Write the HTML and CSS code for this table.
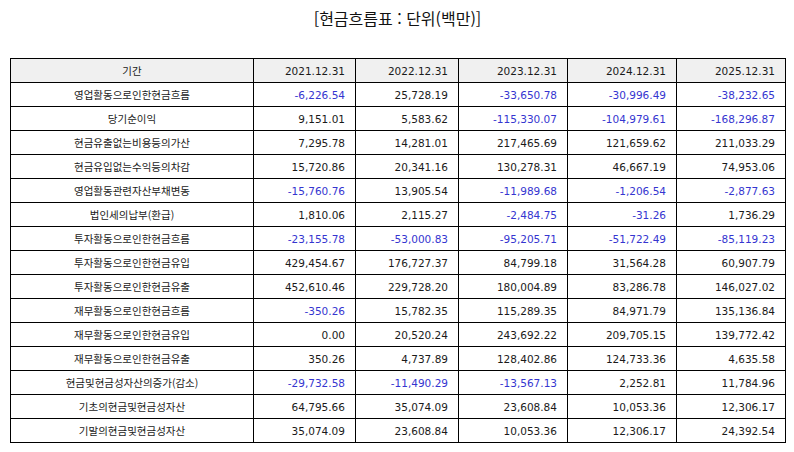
FILE: index.html
```html
<!DOCTYPE html>
<html lang="ko">
<head>
<meta charset="utf-8">
<link rel="stylesheet" href="styles.css">
</head>
<body>
<div class="page">
  <h1 class="title">[현금흐름표 : 단위(백만)]</h1>
  <table class="cf">
    <colgroup>
      <col class="c-label"><col class="c1"><col class="c2"><col class="c3"><col class="c4"><col class="c5">
    </colgroup>
    <thead>
      <tr><th class="label">기간</th><th>2021.12.31</th><th>2022.12.31</th><th>2023.12.31</th><th>2024.12.31</th><th>2025.12.31</th></tr>
    </thead>
    <tbody>
      <tr><td class="label">영업활동으로인한현금흐름</td><td class="neg">-6,226.54</td><td>25,728.19</td><td class="neg">-33,650.78</td><td class="neg">-30,996.49</td><td class="neg">-38,232.65</td></tr>
      <tr><td class="label">당기순이익</td><td>9,151.01</td><td>5,583.62</td><td class="neg">-115,330.07</td><td class="neg">-104,979.61</td><td class="neg">-168,296.87</td></tr>
      <tr><td class="label">현금유출없는비용등의가산</td><td>7,295.78</td><td>14,281.01</td><td>217,465.69</td><td>121,659.62</td><td>211,033.29</td></tr>
      <tr><td class="label">현금유입없는수익등의차감</td><td>15,720.86</td><td>20,341.16</td><td>130,278.31</td><td>46,667.19</td><td>74,953.06</td></tr>
      <tr><td class="label">영업활동관련자산부채변동</td><td class="neg">-15,760.76</td><td>13,905.54</td><td class="neg">-11,989.68</td><td class="neg">-1,206.54</td><td class="neg">-2,877.63</td></tr>
      <tr><td class="label">법인세의납부(환급)</td><td>1,810.06</td><td>2,115.27</td><td class="neg">-2,484.75</td><td class="neg">-31.26</td><td>1,736.29</td></tr>
      <tr><td class="label">투자활동으로인한현금흐름</td><td class="neg">-23,155.78</td><td class="neg">-53,000.83</td><td class="neg">-95,205.71</td><td class="neg">-51,722.49</td><td class="neg">-85,119.23</td></tr>
      <tr><td class="label">투자활동으로인한현금유입</td><td>429,454.67</td><td>176,727.37</td><td>84,799.18</td><td>31,564.28</td><td>60,907.79</td></tr>
      <tr><td class="label">투자활동으로인한현금유출</td><td>452,610.46</td><td>229,728.20</td><td>180,004.89</td><td>83,286.78</td><td>146,027.02</td></tr>
      <tr><td class="label">재무활동으로인한현금흐름</td><td class="neg">-350.26</td><td>15,782.35</td><td>115,289.35</td><td>84,971.79</td><td>135,136.84</td></tr>
      <tr><td class="label">재무활동으로인한현금유입</td><td>0.00</td><td>20,520.24</td><td>243,692.22</td><td>209,705.15</td><td>139,772.42</td></tr>
      <tr><td class="label">재무활동으로인한현금유출</td><td>350.26</td><td>4,737.89</td><td>128,402.86</td><td>124,733.36</td><td>4,635.58</td></tr>
      <tr><td class="label">현금및현금성자산의증가(감소)</td><td class="neg">-29,732.58</td><td class="neg">-11,490.29</td><td class="neg">-13,567.13</td><td>2,252.81</td><td>11,784.96</td></tr>
      <tr><td class="label">기초의현금및현금성자산</td><td>64,795.66</td><td>35,074.09</td><td>23,608.84</td><td>10,053.36</td><td>12,306.17</td></tr>
      <tr><td class="label">기말의현금및현금성자산</td><td>35,074.09</td><td>23,608.84</td><td>10,053.36</td><td>12,306.17</td><td>24,392.54</td></tr>
    </tbody>
  </table>
</div>
</body>
</html>
```

FILE: styles.css
```css
html, body {
  margin: 0;
  padding: 0;
  background: #ffffff;
}

.page {
  width: 794px;
  padding: 0 9px 0 10px;
  box-sizing: border-box;
  font-family: "Noto Sans CJK KR", "Noto Sans", sans-serif;
  color: #111111;
}

.title {
  margin: 0;
  padding-top: 6px;
  height: 58px;
  box-sizing: border-box;
  font-size: 16px;
  font-weight: normal;
  line-height: 24px;
  text-align: center;
  color: #111111;
}

.cf {
  width: 775px;
  border-collapse: collapse;
  table-layout: fixed;
  font-family: "DejaVu Sans", "Noto Sans CJK KR", sans-serif;
  font-size: 10.5px;
}

.c-label { width: 243px; }
.c1 { width: 102px; }
.c2 { width: 103px; }
.c3 { width: 109px; }
.c4 { width: 109px; }
.c5 { width: 109px; }

.cf th,
.cf td {
  border: 1px solid #000000;
  height: 23px;
  padding: 0 10px;
  line-height: 14px;
  text-align: right;
  font-weight: normal;
  white-space: nowrap;
  color: #1a1a1a;
}

.cf thead th {
  background: #f0f0f0;
}

.cf .label {
  text-align: center;
  font-family: "Noto Sans CJK KR", "Noto Sans", sans-serif;
}

.cf .neg {
  color: #3535d0;
}
```
